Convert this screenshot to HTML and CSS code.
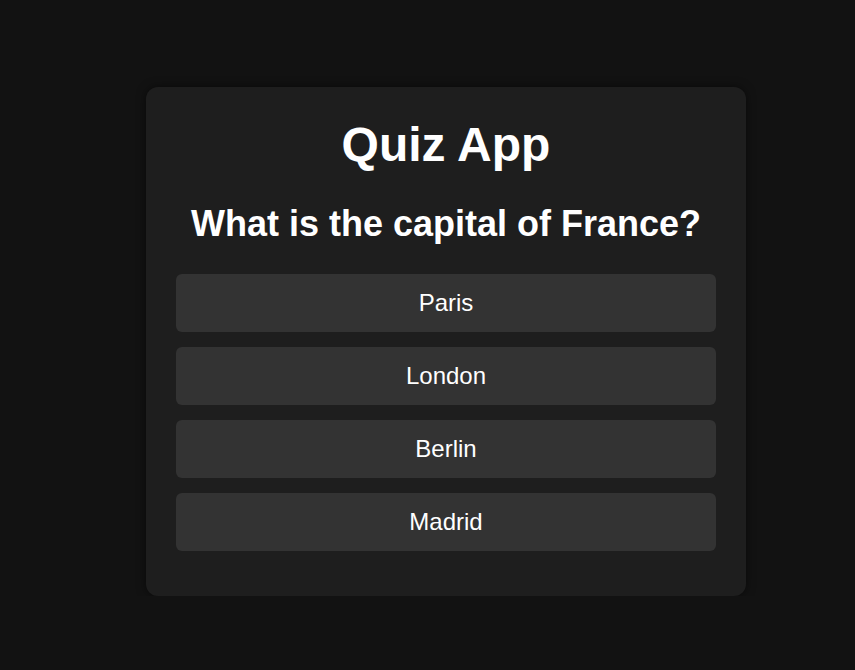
FILE: index.html
```html
<!DOCTYPE html>
<html lang="en">
<head>
<meta charset="utf-8">
<title>Quiz App</title>
<link rel="stylesheet" href="styles.css">
</head>
<body>
<main class="quiz">
  <h1 class="quiz-title">Quiz App</h1>
  <h2 class="quiz-question">What is the capital of France?</h2>
  <div class="answers">
    <button class="answer">Paris</button>
    <button class="answer">London</button>
    <button class="answer">Berlin</button>
    <button class="answer">Madrid</button>
  </div>
</main>
</body>
</html>
```

FILE: styles.css
```css
html, body {
  margin: 0;
  padding: 0;
  background: #121212;
  font-family: "Liberation Sans", Arial, sans-serif;
  color: #ffffff;
}

body {
  padding: 87px 0 0 146px;
}

.quiz {
  box-sizing: border-box;
  width: 600px;
  height: 509px;
  padding: 30px 30px 45px;
  background: #1e1e1e;
  border-radius: 12px;
  box-shadow: 0 0 10px rgba(0, 0, 0, 0.5);
  text-align: center;
}

.quiz-title {
  margin: 0 0 31px;
  font-size: 48px;
  font-weight: bold;
  line-height: normal;
}

.quiz-question {
  margin: 0 0 29px;
  font-size: 36px;
  font-weight: bold;
  line-height: normal;
}

.answers {
  display: flex;
  flex-direction: column;
  gap: 15.5px;
}

.answer {
  display: block;
  box-sizing: border-box;
  width: 100%;
  height: 57.6px;
  padding: 0 15px;
  border: none;
  border-radius: 6px;
  background: #333333;
  color: #ffffff;
  font-family: "Liberation Sans", Arial, sans-serif;
  font-size: 24px;
  line-height: 57.6px;
  cursor: pointer;
}
```
